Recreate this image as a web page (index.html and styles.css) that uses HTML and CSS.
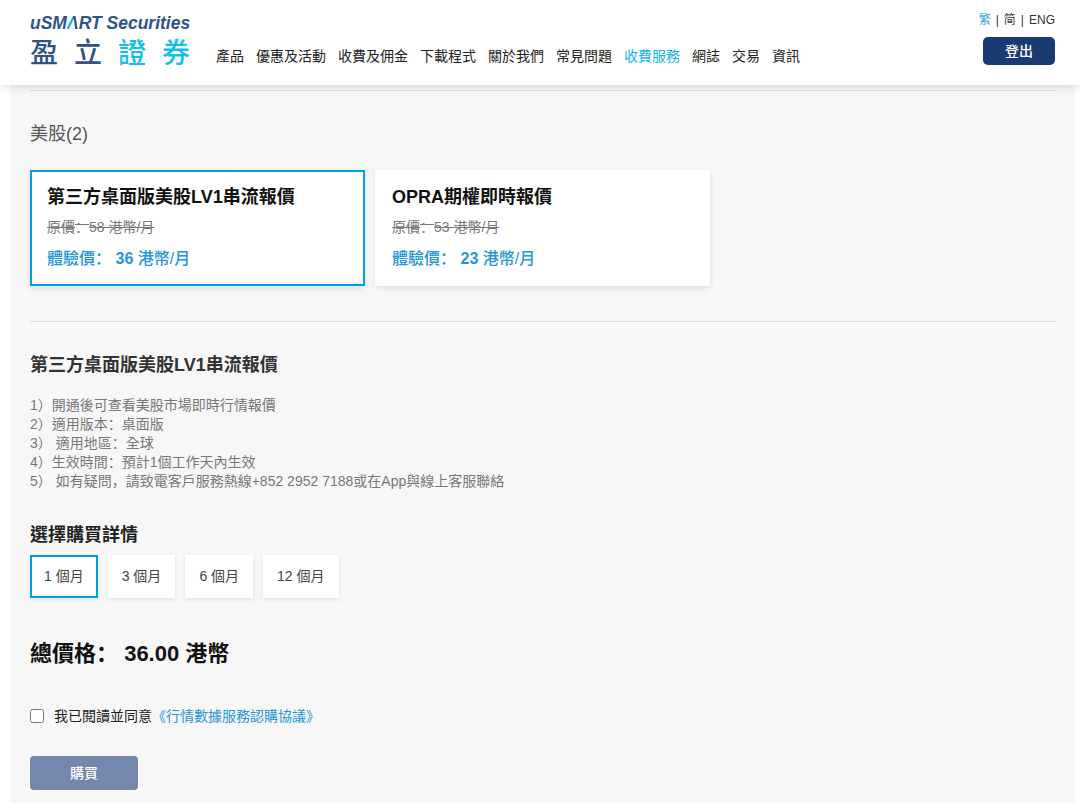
FILE: index.html
```html
<!DOCTYPE html>
<html lang="zh-Hant">

<head>
    <meta charset="UTF-8">
    <meta name="viewport" content="width=device-width, initial-scale=1.0">
    <title>收費服務</title>
    <link rel="stylesheet" href="styles.css">
</head>

<body>
    <header class="header">
        <a class="logo">
            <span class="logo-en">uSM<i>&#923;</i>RT Securities</span>
            <span class="logo-cn">盈立<em>證券</em></span>
        </a>
        <ul class="nav">
            <li>產品</li>
            <li>優惠及活動</li>
            <li>收費及佣金</li>
            <li>下載程式</li>
            <li>關於我們</li>
            <li>常見問題</li>
            <li class="active">收費服務</li>
            <li>網誌</li>
            <li>交易</li>
            <li>資訊</li>
        </ul>
        <div class="header-right">
            <div class="lang"><span class="active">繁</span><s>|</s><span>简</span><s>|</s><span>ENG</span></div>
            <div class="logout">登出</div>
        </div>
    </header>

    <main class="main">
        <h2 class="market">美股(2)</h2>
        <div class="cards">
            <div class="card active">
                <h3>第三方桌面版美股LV1串流報價</h3>
                <p class="old">原價<span class="punc" lang="zh-Hans">：</span>58 港幣/月</p>
                <p class="price">體驗價<span class="punc" lang="zh-Hans">：</span> <b>36</b> 港幣/月</p>
            </div>
            <div class="card">
                <h3>OPRA期權即時報價</h3>
                <p class="old">原價<span class="punc" lang="zh-Hans">：</span>53 港幣/月</p>
                <p class="price">體驗價<span class="punc" lang="zh-Hans">：</span> <b>23</b> 港幣/月</p>
            </div>
        </div>

        <h3 class="detail-title">第三方桌面版美股LV1串流報價</h3>
        <ul class="detail">
            <li>1）開通後可查看美股市場即時行情報價</li>
            <li>2）適用版本<span class="punc" lang="zh-Hans">：</span>桌面版</li>
            <li>3） 適用地區<span class="punc" lang="zh-Hans">：</span>全球</li>
            <li>4）生效時間<span class="punc" lang="zh-Hans">：</span>預計1個工作天內生效</li>
            <li>5） 如有疑問<span class="punc" lang="zh-Hans">，</span>請致電客戶服務熱線+852 2952 7188或在App與線上客服聯絡</li>
        </ul>

        <h4 class="choose">選擇購買詳情</h4>
        <div class="months">
            <div class="month active">1 個月</div>
            <div class="month">3 個月</div>
            <div class="month">6 個月</div>
            <div class="month">12 個月</div>
        </div>

        <div class="total">總價格<span class="punc" lang="zh-Hans">：</span> 36.00 港幣</div>

        <label class="agree">
            <input type="checkbox">
            <span>我已閱讀並同意</span><a>《行情數據服務認購協議》</a>
        </label>

        <div class="buy">購買</div>
    </main>
</body>

</html>
```

FILE: styles.css
```css
* {
    margin: 0;
    padding: 0;
    box-sizing: border-box;
}

li {
    list-style: none;
}

html,
body {
    height: 803px;
    overflow: hidden;
}

body {
    background-color: #fff;
    font-family: "Liberation Sans", "Noto Sans CJK TC", sans-serif;
    color: #333;
    text-spacing-trim: space-all;
}

/* 冒号逗号靠左下 */
.punc {
    font-family: "Noto Sans CJK SC", sans-serif;
    line-height: 0;
}

/* header */
.header {
    height: 85px;
    background-color: #fff;
    box-shadow: 0 2px 8px rgba(0, 0, 0, 0.12);
    display: flex;
    padding: 0 25px 0 30px;
    position: relative;
}

.logo {
    width: 186px;
    padding-top: 13px;
    display: flex;
    flex-direction: column;
}

.logo-en {
    font-size: 17.5px;
    line-height: 20px;
    font-weight: bold;
    font-style: italic;
    color: #2f5287;
    white-space: nowrap;
}

.logo-en i {
    background: linear-gradient(90deg, #12b5ea 50%, #2f5287 50%);
    -webkit-background-clip: text;
    background-clip: text;
    color: transparent;
}

.logo-cn {
    margin-top: 3px;
    font-size: 28px;
    line-height: 36px;
    font-weight: 500;
    letter-spacing: 16px;
    color: #2f5287;
    white-space: nowrap;
}

.logo-cn em {
    font-style: normal;
    color: #12c0f0;
}

.nav {
    display: flex;
    gap: 12px;
    padding-top: 47px;
    font-size: 14px;
    line-height: 19px;
    color: #222;
    flex: 1;
}

.nav .active {
    color: #12b5ea;
}

.header-right {
    width: 80px;
    padding-top: 13px;
    display: flex;
    flex-direction: column;
    align-items: flex-end;
}

.lang {
    font-size: 12px;
    line-height: 15px;
    color: #333;
    white-space: nowrap;
}

.lang .active {
    color: #2aa5d8;
}

.lang s {
    text-decoration: none;
    margin: 0 5px;
}

.logout {
    width: 72px;
    height: 28px;
    margin-top: 9px;
    background-color: #193a73;
    border-radius: 5px;
    color: #fff;
    font-size: 14px;
    font-weight: 500;
    line-height: 28px;
    text-align: center;
}

/* main */
.main {
    margin: 0 5px 0 10px;
    height: 718px;
    background-color: #f7f7f7;
    padding: 5px 20px 0;
}

.market {
    border-top: 1px solid #ddd;
    padding-top: 30px;
    font-size: 18px;
    line-height: 26px;
    font-weight: normal;
    color: #555;
}

.cards {
    display: flex;
    gap: 10px;
    margin-top: 23px;
    padding-bottom: 35px;
    border-bottom: 1px solid #ddd;
}

.card {
    width: 335px;
    height: 116px;
    background-color: #fff;
    padding: 14px 17px;
    box-shadow: 0 2px 6px rgba(0, 0, 0, 0.1);
}

.card.active {
    border: 2px solid #00a0dc;
    padding: 12px 15px;
}

.card h3 {
    font-size: 18px;
    line-height: 26px;
    color: #111;
}

.old {
    margin-top: 7px;
    font-size: 14px;
    line-height: 20px;
    color: #777;
    text-decoration: line-through;
}

.price {
    margin-top: 11px;
    font-size: 16px;
    line-height: 22px;
    color: #2596d8;
    font-weight: 500;
}

.detail-title {
    margin-top: 30px;
    font-size: 18px;
    line-height: 26px;
    color: #333;
}

.detail {
    margin-top: 18px;
    font-size: 14px;
    line-height: 19px;
    color: #777;
}

.choose {
    margin-top: 31px;
    font-size: 18px;
    line-height: 26px;
    color: #222;
}

.months {
    display: flex;
    gap: 10px;
    margin-top: 7px;
}

.month {
    height: 43px;
    padding: 0 14px;
    background-color: #fff;
    box-shadow: 0 2px 5px rgba(0, 0, 0, 0.08);
    font-size: 14px;
    line-height: 43px;
    color: #444;
}

.month.active {
    border: 2px solid #00a0dc;
    padding: 0 12px;
    line-height: 39px;
}

.total {
    margin-top: 41px;
    font-size: 22px;
    line-height: 30px;
    font-weight: bold;
    color: #111;
}

.agree {
    display: flex;
    align-items: center;
    margin-top: 37px;
    font-size: 14px;
    line-height: 20px;
    color: #222;
}

.agree input {
    width: 14px;
    height: 14px;
    margin-right: 10px;
}

.agree a {
    color: #2596d8;
}

.buy {
    width: 108px;
    height: 34px;
    margin-top: 30px;
    background-color: #7488ab;
    border-radius: 4px;
    color: #fff;
    font-size: 14px;
    font-weight: 500;
    line-height: 34px;
    text-align: center;
}
```
